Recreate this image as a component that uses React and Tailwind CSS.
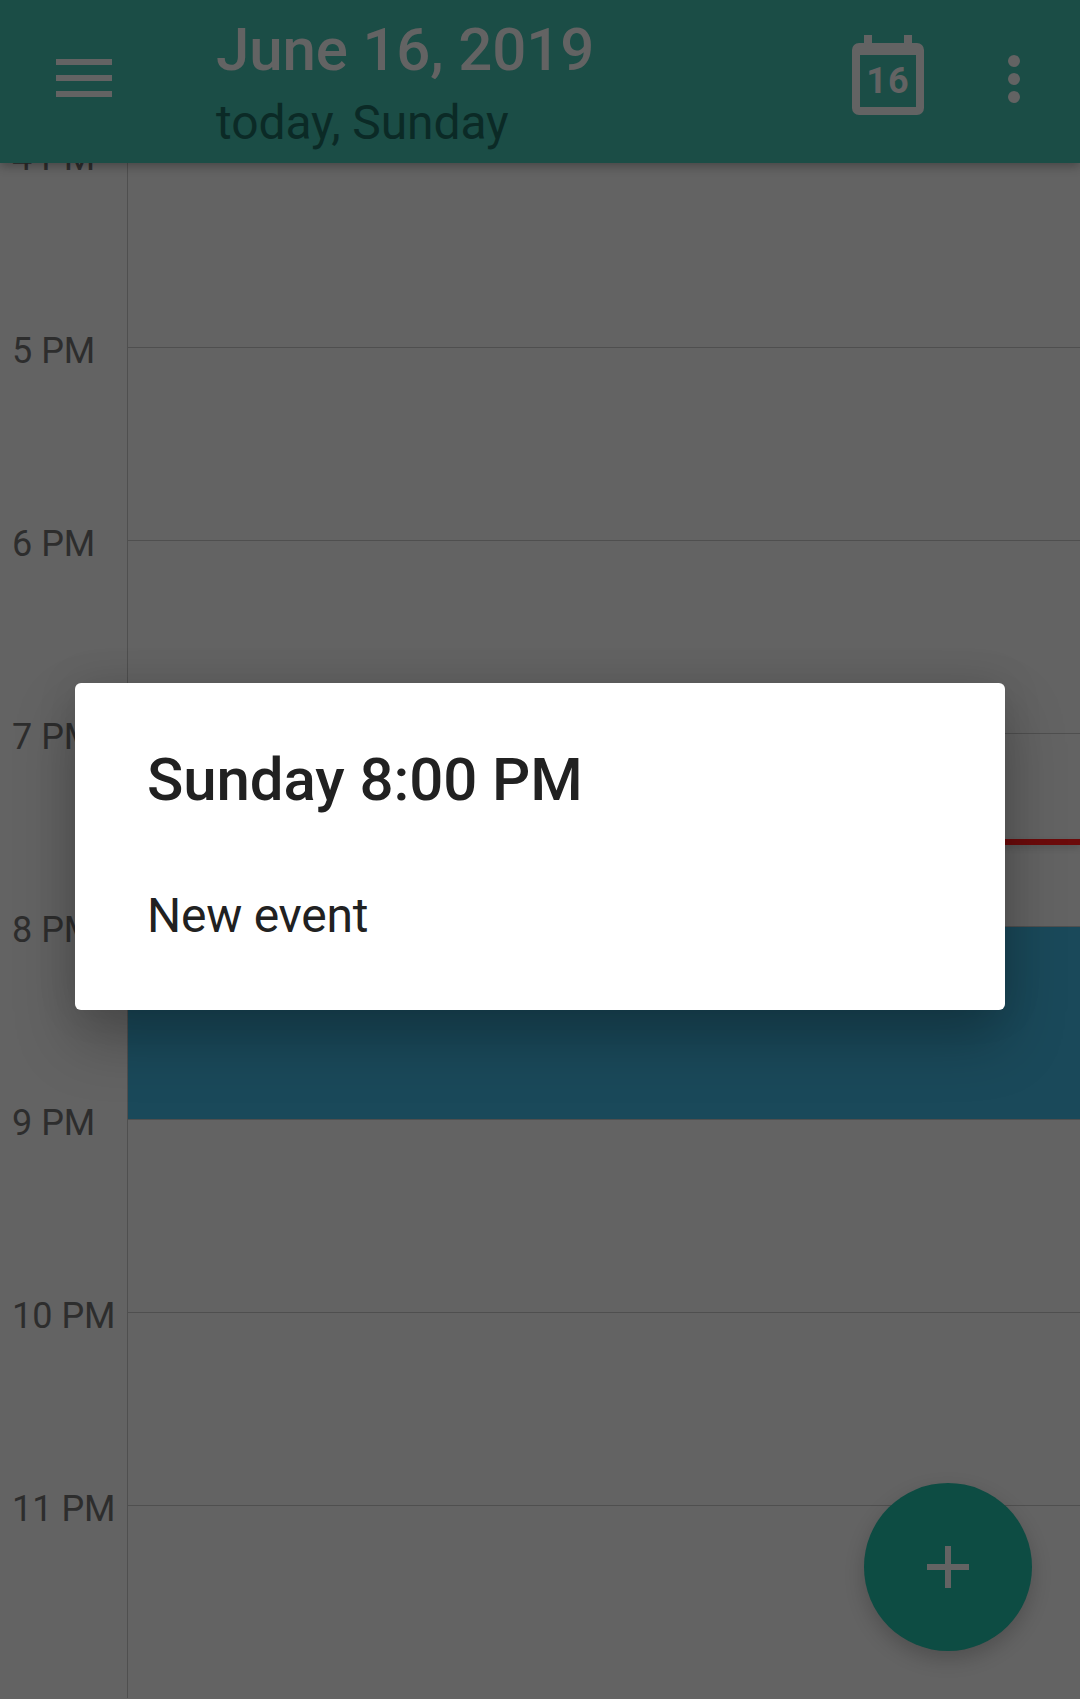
const hours = ['4 PM', '5 PM', '6 PM', '7 PM', '8 PM', '9 PM', '10 PM', '11 PM'];

function MenuIcon() {
  return (
    <svg width="56" height="38" viewBox="0 0 56 38" className="shrink-0">
      <rect x="0" y="0" width="56" height="6" fill="#636363" />
      <rect x="0" y="16" width="56" height="6" fill="#636363" />
      <rect x="0" y="32" width="56" height="6" fill="#636363" />
    </svg>
  );
}

function CalendarIcon() {
  return (
    <svg width="72" height="80" viewBox="0 0 72 80" className="shrink-0">
      <rect x="12" y="0" width="8" height="10" fill="#636363" />
      <rect x="52" y="0" width="8" height="10" fill="#636363" />
      <rect x="4" y="12" width="64" height="64" rx="3" fill="none" stroke="#636363" strokeWidth="8" />
      <rect x="4" y="12" width="64" height="8" fill="#636363" />
      <text x="36" y="58" textAnchor="middle" fontFamily="Roboto, sans-serif" fontWeight="700" fontSize="36" letterSpacing="1" fill="#636363">16</text>
    </svg>
  );
}

function DotsIcon() {
  return (
    <svg width="12" height="48" viewBox="0 0 12 48" className="shrink-0">
      <circle cx="6" cy="6" r="6" fill="#636363" />
      <circle cx="6" cy="24" r="6" fill="#636363" />
      <circle cx="6" cy="42" r="6" fill="#636363" />
    </svg>
  );
}

export default function App() {
  return (
    <div className="relative w-[1080px] h-[1699px] overflow-hidden bg-[#636363] font-[Roboto,sans-serif]">
      <header className="relative z-10 flex items-center h-[163px] bg-[#1b4d46] shadow-[0_3px_10px_rgba(0,0,0,0.3)]">
        <div className="ml-[56px] mt-[-7px]">
          <MenuIcon />
        </div>
        <div className="ml-[104px] flex flex-col">
          <div className="text-[60px] leading-[60px] font-medium tracking-[-0.15px] text-[#636363] mt-[8px]">June 16, 2019</div>
          <div className="text-[48px] leading-[56px] tracking-[-0.1px] text-[#0b2a26] mt-[15px]">today, Sunday</div>
        </div>
        <div className="ml-auto mt-[-13px]">
          <CalendarIcon />
        </div>
        <div className="ml-[84px] mr-[60px] mt-[-5px]">
          <DotsIcon />
        </div>
      </header>

      <div className="h-[1536px] overflow-hidden">
        <div className="-mt-[9px]">
          {hours.map((label, index) => (
            <div key={label} className="flex h-[193px]">
              <div className="w-[128px] shrink-0 border-r border-[#4f4f4f]">
                <div className="-mt-[16px] pl-[12px] text-[36px] leading-[40px] text-[#2d2d2d]">{label}</div>
              </div>
              <div className="relative flex-1 border-t border-[#4f4f4f]">
                {index === 4 && <div className="h-full bg-[#1a495a]"></div>}
                {index === 3 && (
                  <div className="absolute left-0 right-0 top-[105px] h-[6px] bg-[#6c0b0b] shadow-[0_3px_6px_rgba(0,0,0,0.15)]"></div>
                )}
              </div>
            </div>
          ))}
        </div>
      </div>

      <button className="absolute right-[48px] bottom-[48px] flex items-center justify-center w-[168px] h-[168px] rounded-full bg-[#0d4c43] shadow-[0_8px_20px_rgba(0,0,0,0.2)]">
        <svg width="42" height="42" viewBox="0 0 42 42">
          <rect x="18" y="0" width="6" height="42" fill="#636363" />
          <rect x="0" y="18" width="42" height="6" fill="#636363" />
        </svg>
      </button>

      <div className="absolute left-[75px] top-[683px] w-[930px] h-[327px] rounded-[6px] bg-white pl-[72px] shadow-[0_30px_60px_rgba(0,0,0,0.25),0_0_40px_rgba(0,0,0,0.1)]">
        <div className="mt-[62px] text-[60px] leading-[70px] font-medium tracking-[-0.1px] text-[#212121]">Sunday 8:00 PM</div>
        <div className="mt-[73px] text-[48px] leading-[56px] tracking-[-0.25px] text-[#212121]">New event</div>
      </div>
    </div>
  );
}
